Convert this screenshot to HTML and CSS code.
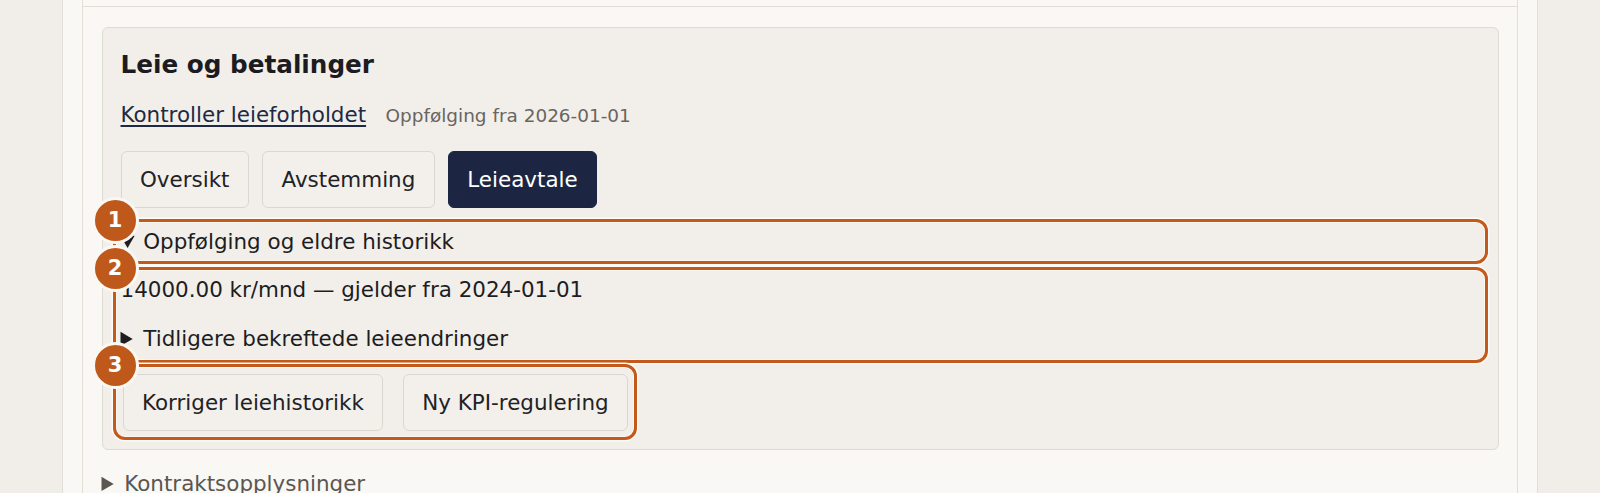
FILE: index.html
```html
<!DOCTYPE html>
<html lang="no">
<head>
<meta charset="utf-8">
<title>Leie og betalinger</title>
<link rel="stylesheet" href="styles.css">
</head>
<body>
<div class="page">
  <div class="prev-block"></div>
  <section class="section">
    <div class="card">
      <h2 class="card-title">Leie og betalinger</h2>
      <div class="link-row">
        <a class="link" href="#">Kontroller leieforholdet</a>
        <span class="muted">Oppfølging fra 2026-01-01</span>
      </div>
      <div class="tabs">
        <button class="btn" type="button">Oversikt</button>
        <button class="btn" type="button">Avstemming</button>
        <button class="btn btn-active" type="button">Leieavtale</button>
      </div>
      <details class="history" open>
        <summary class="hl hl-1"><span class="badge">1</span>Oppfølging og eldre historikk</summary>
      </details>
      <div class="hl hl-2 rent">
        <span class="badge">2</span>
        <p class="rent-line">14000.00 kr/mnd — gjelder fra 2024-01-01</p>
        <details class="earlier">
          <summary>Tidligere bekreftede leieendringer</summary>
        </details>
      </div>
      <div class="hl hl-3 actions">
        <span class="badge">3</span>
        <button class="btn" type="button">Korriger leiehistorikk</button>
        <button class="btn" type="button">Ny KPI-regulering</button>
      </div>
    </div>
    <details class="contract">
      <summary>Kontraktsopplysninger</summary>
    </details>
  </section>
</div>
</body>
</html>
```

FILE: styles.css
```css
html, body {
  margin: 0;
  padding: 0;
}

body {
  background: #f1eee9;
  font-family: "DejaVu Sans", "Noto Sans", sans-serif;
  font-size: 21.45px;
  line-height: 29px;
  color: #1d1d22;
}

.page {
  box-sizing: border-box;
  margin-left: 62px;
  width: 1476px;
  min-height: 520px;
  background: #f9f8f4;
  border-left: 1px solid #e2ded6;
  border-right: 1px solid #e2ded6;
  padding: 0 19px 40px;
}

.prev-block {
  height: 6px;
  border: 1px solid #e2ded6;
  border-top: none;
}

.section {
  border-left: 1px solid #e2ded6;
  border-right: 1px solid #e2ded6;
  padding: 19.5px 18.5px 0;
  min-height: 480px;
}

.card {
  background: #f2efea;
  border: 1px solid #dfdbd3;
  border-radius: 6px;
  padding: 18px 18px 17px;
}

.card-title {
  margin: 4.8px 0 0;
  font-size: 24.7px;
  line-height: 29px;
  font-weight: bold;
  color: #1b1b21;
}

.link-row {
  display: flex;
  align-items: baseline;
  gap: 19.5px;
  margin-top: 20.7px;
}

.link {
  color: #1e2a45;
  text-decoration: underline;
  text-underline-offset: 3px;
}

.muted {
  font-size: 18.45px;
  line-height: 20px;
  color: #6a655e;
}

.tabs {
  display: flex;
  gap: 13px;
  margin-top: 21.6px;
}

.btn {
  font-family: inherit;
  font-size: 21.45px;
  line-height: 25px;
  padding: 15px 18.5px;
  border: 1px solid #dcd7ce;
  border-radius: 6px;
  background: #f3f0eb;
  color: #222226;
  cursor: pointer;
}

.btn-active {
  background: #1c2642;
  border-color: #1c2642;
  color: #ffffff;
}

.history {
  margin-top: 19px;
}

.history summary,
.earlier summary,
.contract summary {
  cursor: pointer;
}

.rent {
  margin-top: 19px;
  padding-bottom: 2.5px;
}

.rent-line {
  margin: 0;
}

.earlier {
  margin-top: 20px;
}

.actions {
  display: flex;
  gap: 19.4px;
  margin-top: 17px;
  padding: 1.5px 1px 1.5px 2px;
  width: max-content;
}

.hl {
  position: relative;
}

.hl::before {
  content: "";
  position: absolute;
  inset: -8px;
  border: 3.6px solid #c3591a;
  border-radius: 12px;
  box-shadow: 0 0 0 1.5px rgba(255, 253, 249, 0.9), inset 0 0 0 1px rgba(255, 253, 249, 0.6);
  pointer-events: none;
  z-index: 2;
}

.badge {
  position: absolute;
  left: -29px;
  top: -30px;
  width: 41px;
  height: 41px;
  border: 3px solid #fbf8f3;
  border-radius: 50%;
  background: #bf581b;
  color: #ffffff;
  font-size: 21px;
  font-weight: bold;
  line-height: 41px;
  text-align: center;
  z-index: 3;
  list-style: none;
}

.contract {
  margin-top: 18.7px;
  color: #5b5650;
}
```
